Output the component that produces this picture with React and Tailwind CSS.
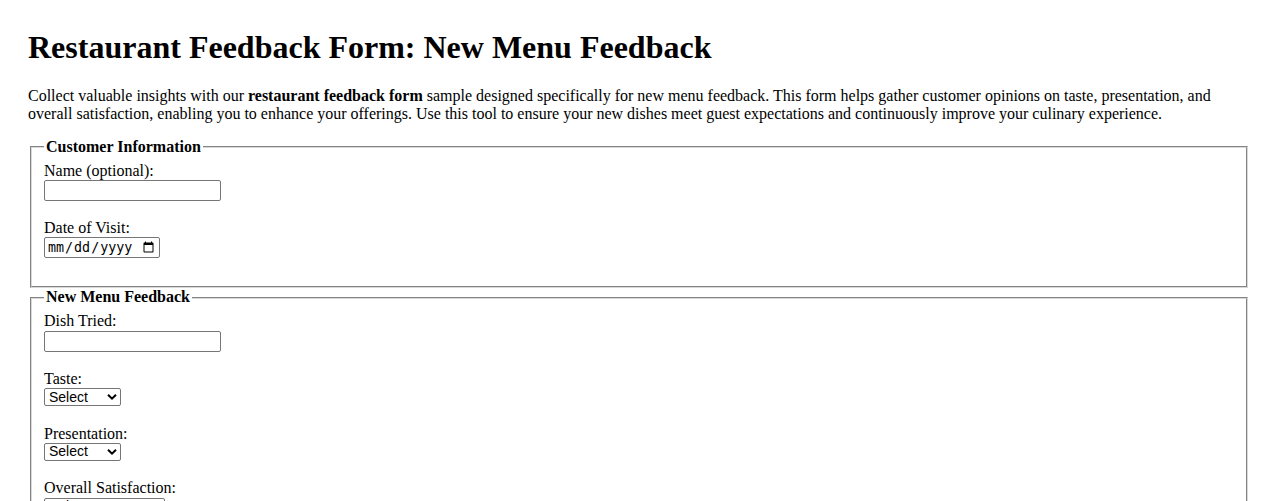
import React from "react";

const Chevron = () => (
  <svg
    className="pointer-events-none absolute right-[4px] top-1/2 -translate-y-1/2"
    width="10"
    height="7"
    viewBox="0 0 10 7"
    fill="none"
  >
    <path d="M1 1.2l4 4 4-4" stroke="#000" strokeWidth="2" />
  </svg>
);

const SelectBox = ({ id, width }) => (
  <div className="relative inline-block align-top">
    <select
      id={id}
      defaultValue=""
      className={`block h-[18px] ${width} appearance-none rounded-[2px] border border-[#767676] bg-white pl-[4px] pr-5 font-['Liberation_Sans',Arial,sans-serif] text-[14px] leading-[15px] text-black`}
    >
      <option value="">Select</option>
      <option value="1">1 - Poor</option>
      <option value="2">2 - Fair</option>
      <option value="3">3 - Good</option>
      <option value="4">4 - Very Good</option>
      <option value="5">5 - Excellent</option>
    </select>
    <Chevron />
  </div>
);

const textInput =
  "block h-[21px] w-[177px] rounded-[2px] border border-[#767676] bg-white px-[2px] font-['Liberation_Sans',Arial,sans-serif] text-[13.33px]";

const Field = ({ label, htmlFor, children }) => (
  <div className="mb-[18px]">
    <label htmlFor={htmlFor} className="block">
      {label}
    </label>
    {children}
  </div>
);

export default function App() {
  return (
    <div className="min-h-screen bg-white px-[28px] pt-[29px] font-['Liberation_Serif','Times_New_Roman',serif] text-base leading-[1.15] text-black">
      <h1 className="mb-[21px] text-[32px] font-bold leading-[1.15]">
        Restaurant Feedback Form: New Menu Feedback
      </h1>
      <p className="mb-[14px]">
        Collect valuable insights with our <strong>restaurant feedback form</strong>{" "}
        sample designed specifically for new menu feedback. This form helps gather
        customer opinions on taste, presentation, and overall satisfaction, enabling
        you to enhance your offerings. Use this tool to ensure your new dishes meet
        guest expectations and continuously improve your culinary experience.
      </p>

      <form>
        <fieldset className="mx-[2px] border-2 border-[#d8d8d8] px-3 pt-[5.6px] pb-[10px] [border-style:groove]">
          <legend className="px-[2px] font-bold">Customer Information</legend>
          <Field label="Name (optional):" htmlFor="name">
            <input id="name" type="text" className={textInput} />
          </Field>
          <Field label="Date of Visit:" htmlFor="visit">
            <input
              id="visit"
              type="date"
              className="block h-[21px] w-[116px] rounded-[2px] border border-[#767676] bg-white px-[2px] font-['DejaVu_Sans_Mono',monospace] text-[13.33px]"
            />
          </Field>
        </fieldset>

        <fieldset className="mx-[2px] border-2 border-[#d8d8d8] px-3 pt-[5.6px] pb-[10px] [border-style:groove]">
          <legend className="px-[2px] font-bold">New Menu Feedback</legend>
          <Field label="Dish Tried:" htmlFor="dish">
            <input id="dish" type="text" className={textInput} />
          </Field>
          <Field label="Taste:" htmlFor="taste">
            <SelectBox id="taste" width="w-[77px]" />
          </Field>
          <Field label="Presentation:" htmlFor="presentation">
            <SelectBox id="presentation" width="w-[77px]" />
          </Field>
          <Field label="Overall Satisfaction:" htmlFor="overall">
            <SelectBox id="overall" width="w-[121px]" />
          </Field>
        </fieldset>
      </form>
    </div>
  );
}
